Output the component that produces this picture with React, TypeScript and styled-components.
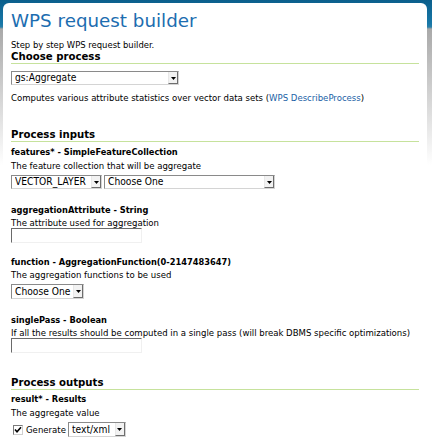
import React from 'react';
import styled, { createGlobalStyle } from 'styled-components';

const GlobalStyle = createGlobalStyle`
  html, body {
    margin: 0;
    padding: 0;
  }
  body {
    width: 432px;
    height: 445px;
    overflow: hidden;
    font-family: 'DejaVu Sans Condensed', 'DejaVu Sans', Verdana, sans-serif;
    background: linear-gradient(
      180deg,
      #0b5f8c 0px,
      #1878a8 24px,
      #2a7fa8 27px,
      #a9a9a9 29px,
      #dcdcdc 110px,
      #ffffff 165px
    );
  }
`;

const Page = styled.div`
  padding: 3px 5px 0 3px;
`;

const Panel = styled.div`
  background: #fff;
  border-radius: 6px 6px 0 0;
  min-height: 442px;
  box-sizing: border-box;
  padding: 7px 8px 0 8px;
  color: #000;
`;

const Title = styled.h1`
  margin: 0;
  font-family: 'DejaVu Sans', Verdana, sans-serif;
  font-weight: normal;
  font-size: 18.3px;
  line-height: 22px;
  color: #1c6db0;
`;

const Intro = styled.p`
  margin: 7px 0 0 0;
  font-size: 9.4px;
  line-height: 11px;
`;

const SectionHeading = styled.h3<{ $top: number }>`
  margin: ${(p) => p.$top}px 0 0 0;
  font-size: 11.3px;
  line-height: 12px;
  font-weight: bold;
  border-bottom: 1px solid #c6e29c;
`;

const Text = styled.p<{ $top?: number }>`
  margin: ${(p) => p.$top ?? 0}px 0 0 0;
  font-size: 9.5px;
  line-height: 11px;
`;

const Link = styled.a`
  color: #1a5fa6;
  text-decoration: none;
`;

const ParamName = styled.div<{ $top: number }>`
  margin-top: ${(p) => p.$top}px;
  font-size: 9.2px;
  line-height: 11px;
  font-weight: bold;
`;

const ControlRow = styled.div<{ $top: number }>`
  display: flex;
  align-items: center;
  gap: 2px;
  margin-top: ${(p) => p.$top}px;
`;

const SelectBox = styled.span<{ $width: number; $height?: number }>`
  display: inline-flex;
  align-items: stretch;
  box-sizing: border-box;
  width: ${(p) => p.$width}px;
  height: ${(p) => p.$height ?? 14}px;
  border: 1px solid;
  border-color: #8a8a8a #d4d4d4 #d4d4d4 #8a8a8a;
  background: #fff;
`;

const NativeSelect = styled.select`
  appearance: none;
  -webkit-appearance: none;
  flex: 1;
  min-width: 0;
  height: 100%;
  border: 0;
  margin: 0;
  padding: 0 0 0 3px;
  background: transparent;
  color: #000;
  font-family: 'DejaVu Sans Condensed', 'DejaVu Sans', Verdana, sans-serif;
  font-size: 10.2px;
  line-height: 12px;
  outline: none;
`;

const ArrowButton = styled.span`
  width: 10px;
  box-sizing: border-box;
  display: flex;
  align-items: center;
  justify-content: center;
  background: #f2f2f2;
  border-left: 1px solid #e8e8e8;
  border-right: 1px solid #6e6e6e;
  border-bottom: 1px solid #6e6e6e;
`;

const TextInput = styled.input<{ $top: number }>`
  display: block;
  box-sizing: border-box;
  width: 131px;
  height: 15px;
  margin: ${(p) => p.$top}px 0 0 0;
  padding: 0 2px;
  border: 1px solid;
  border-color: #6a6a6a #f0f0f0 #f0f0f0 #6a6a6a;
  background: #fff;
  font-size: 10px;
  outline: none;
`;

const CheckLabel = styled.label`
  display: inline-flex;
  align-items: center;
  gap: 3px;
  margin-left: 2px;
  font-size: 9.5px;
  line-height: 11px;
`;

const CheckBox = styled.span`
  display: inline-flex;
  align-items: center;
  justify-content: center;
  width: 10px;
  height: 10px;
  box-sizing: border-box;
  border: 1px solid;
  border-color: #7a7a7a #cfcfcf #cfcfcf #7a7a7a;
  background: #fff;
`;

const Select = ({ width, value, height }: { width: number; value: string; height?: number }) => (
  <SelectBox $width={width} $height={height}>
    <NativeSelect defaultValue={value}>
      <option>{value}</option>
    </NativeSelect>
    <ArrowButton>
      <svg width="5" height="4" viewBox="0 0 5 4">
        <path d="M0 1h5L2.5 4z" fill="#000" />
      </svg>
    </ArrowButton>
  </SelectBox>
);

const App = () => (
  <Page>
    <GlobalStyle />
    <Panel>
      <Title>WPS request builder</Title>
      <Intro>Step by step WPS request builder.</Intro>
      <SectionHeading $top={1}>Choose process</SectionHeading>
      <ControlRow $top={7}>
        <Select width={168} value="gs:Aggregate" />
      </ControlRow>
      <Text $top={7}>
        Computes various attribute statistics over vector data sets (
        <Link href="#">WPS DescribeProcess</Link>)
      </Text>

      <SectionHeading $top={26}>Process inputs</SectionHeading>
      <ParamName $top={4}>features* - SimpleFeatureCollection</ParamName>
      <Text $top={3}>The feature collection that will be aggregate</Text>
      <ControlRow $top={4}>
        <Select width={91} value="VECTOR_LAYER" />
        <Select width={171} value="Choose One" />
      </ControlRow>

      <ParamName $top={15}>aggregationAttribute - String</ParamName>
      <Text $top={2}>The attribute used for aggregation</Text>
      <TextInput $top={0} type="text" />

      <ParamName $top={13}>function - AggregationFunction(0-2147483647)</ParamName>
      <Text $top={2}>The aggregation functions to be used</Text>
      <ControlRow $top={4}>
        <Select width={73} value="Choose One" height={15} />
      </ControlRow>

      <ParamName $top={15}>singlePass - Boolean</ParamName>
      <Text $top={2}>
        If all the results should be computed in a single pass (will break DBMS specific optimizations)
      </Text>
      <TextInput $top={0} type="text" />

      <SectionHeading $top={24}>Process outputs</SectionHeading>
      <ParamName $top={3}>result* - Results</ParamName>
      <Text $top={3}>The aggregate value</Text>
      <ControlRow $top={4}>
        <CheckLabel>
          <CheckBox>
            <svg width="8" height="8" viewBox="0 0 8 8">
              <path d="M1 3.5l2 2.2L7 1.2" fill="none" stroke="#000" strokeWidth="1.6" />
            </svg>
          </CheckBox>
          Generate
        </CheckLabel>
        <Select width={58} value="text/xml" height={15} />
      </ControlRow>
    </Panel>
  </Page>
);

export default App;
